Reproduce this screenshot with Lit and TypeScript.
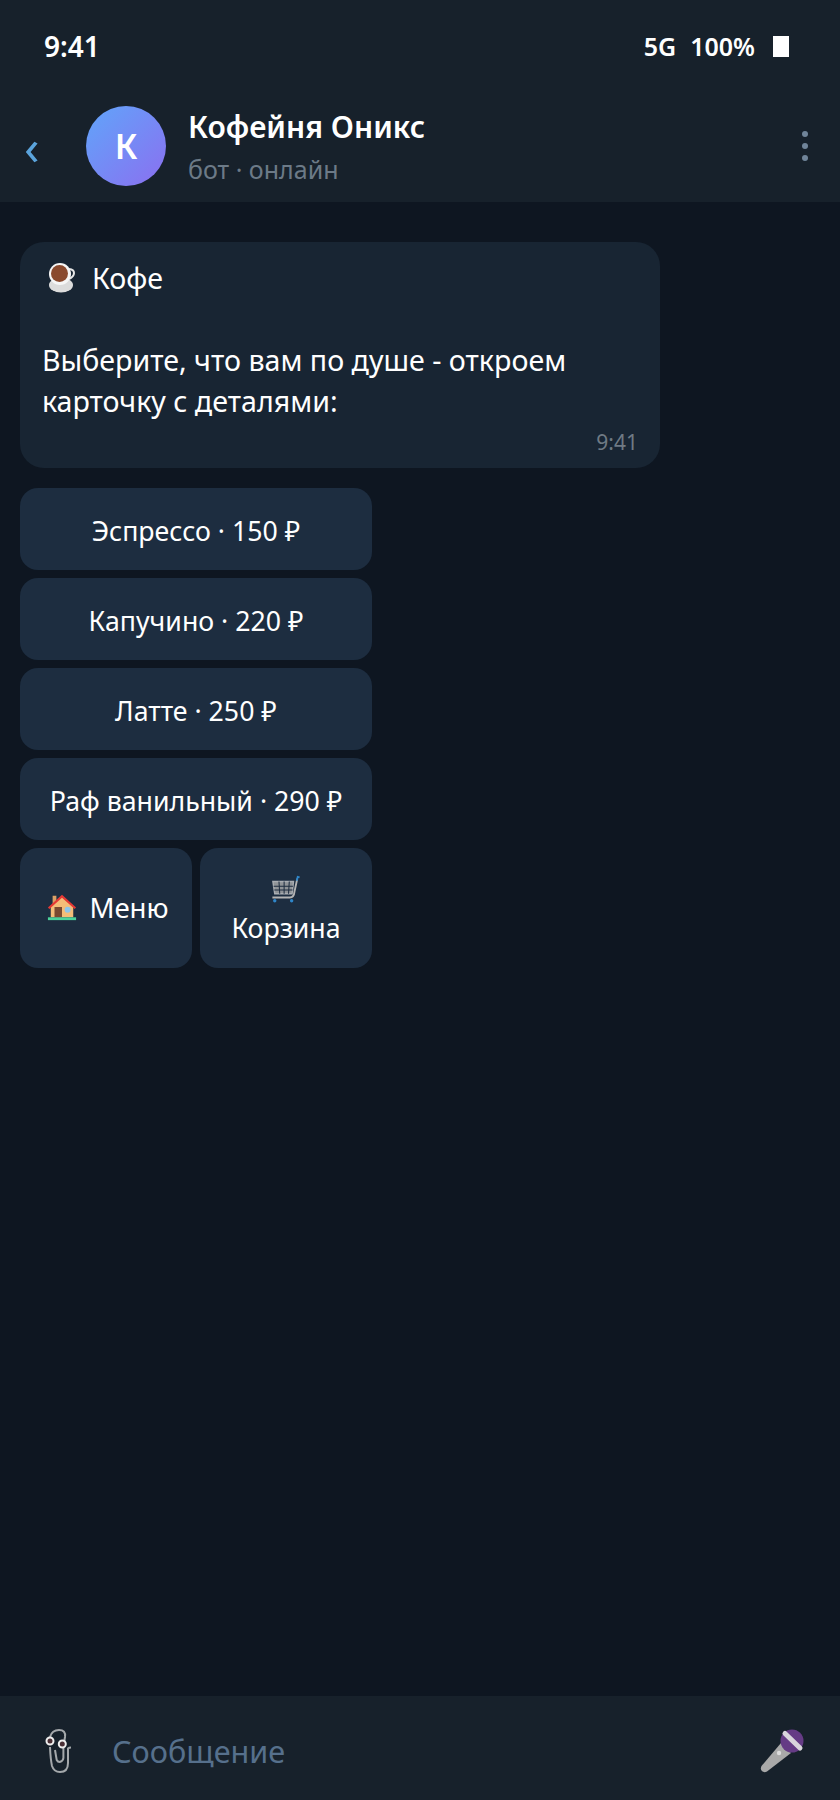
import { LitElement, html, css, svg } from 'lit';
import { customElement } from 'lit/decorators.js';

const coffeeIcon = svg`<svg class="emoji cup" viewBox="0 0 30 32" width="30" height="32">
  <path d="M21 7q5 .500 5 4t-5 6" fill="none" stroke="#e6e6e6" stroke-width="2"/>
  <ellipse cx="13" cy="23" rx="12" ry="7.500" fill="#dcdcdc"/>
  <circle cx="12" cy="12" r="11" fill="#f6f6f6"/>
  <circle cx="11.500" cy="11.500" r="8.500" fill="#8a4a2e"/>
</svg>`;

const houseIcon = svg`<svg class="emoji" viewBox="0 0 32 32" width="30" height="30">
  <rect x="6" y="4" width="4" height="9" fill="#d9a066"/>
  <path d="M4 15 16 5l12 10v12H4z" fill="#f4bd78"/>
  <path d="M1 16.500 16 3l15 13.500-1.500 1.500L16 6 2.500 18z" fill="#e53935"/>
  <rect x="8" y="16" width="8" height="11" fill="#7a4a30"/>
  <circle cx="22" cy="19" r="3.200" fill="#8ec5ea"/>
  <rect x="1" y="27" width="30" height="3" fill="#4cd39a"/>
</svg>`;

const cartIcon = svg`<svg class="emoji" viewBox="0 0 32 32" width="30" height="30">
  <path d="M2 7h22l-1.500 13H4z" fill="#8f9397" stroke="#a9adb2" stroke-width="1.500"/>
  <path d="M8.500 7l.8 13M14 7v13M19.500 7l-.8 13M2.800 12h20.600M3.500 16h19.400" stroke="#1e2d40" stroke-width="1.100" fill="none"/>
  <path d="M28 4l-3 14q-.5 6-5 6H1.500" fill="none" stroke="#b4b4b4" stroke-width="2"/>
  <path d="M27.500 6l1-4 2 .6" fill="none" stroke="#2f86c9" stroke-width="2"/>
  <circle cx="4" cy="27.500" r="1.800" fill="#2f86c9"/>
  <circle cx="22" cy="27.500" r="1.800" fill="#2f86c9"/>
</svg>`;

const clipIcon = svg`<svg class="tool" viewBox="0 0 28 44" width="28" height="44">
  <g fill="none" stroke="#a4a8ab" stroke-width="2">
    <path d="M5 8q2-7 9-7t6 7l-1 6"/>
    <path d="M5 18q.500 12 2 19 2 6 8 6 8 0 8-9V19.500q1-1 3-1"/>
    <path d="M10 21l1.700 10q1 2 3 2 3.500-1 3.700-4V19"/>
  </g>
  <circle cx="5" cy="12" r="3.500" fill="#4a2f35" stroke="#eee" stroke-width="2"/>
  <circle cx="17.300" cy="15" r="3.500" fill="#4a2f35" stroke="#eee" stroke-width="2"/>
</svg>`;

const micIcon = svg`<svg class="tool" viewBox="0 0 44 44" width="44" height="44">
  <path d="M21 14 31 24 7 42.500q-3 1.500-5-.500t-.500-5z" fill="#a9a9a9"/>
  <circle cx="19" cy="24" r="2.200" fill="#dcdcdc"/>
  <circle cx="32" cy="12" r="11.500" fill="#653b85"/>
  <path d="M25 4.500 40 19" stroke="#d9d5dc" stroke-width="5" stroke-linecap="round"/>
</svg>`;

const products = ['Эспрессо · 150 ₽', 'Капучино · 220 ₽', 'Латте · 250 ₽', 'Раф ванильный · 290 ₽'];

@customElement('app-root')
export class AppRoot extends LitElement {
  static styles = css`
    :host {
      display: flex;
      flex-direction: column;
      height: 1800px;
      background: #0e1621;
      color: #fff;
      font-family: 'Noto Sans', 'Open Sans', sans-serif;
    }
    .status {
      height: 92px;
      box-sizing: border-box;
      padding: 0 51px 0 44px;
      background: #17212b;
      display: flex;
      justify-content: space-between;
      align-items: center;
      font-weight: 600;
    }
    .time { font-size: 28px; }
    .indicators {
      display: flex;
      align-items: center;
      gap: 14px;
      font-size: 25px;
    }
    .battery { width: 16px; height: 21px; background: #fff; margin-left: 4px; }
    .header {
      height: 110px;
      box-sizing: border-box;
      background: #17212b;
      display: flex;
      align-items: center;
      padding: 0 32px 2px 24px;
    }
    .back { width: 42px; color: #5ba4dc; font-size: 50px; line-height: 1; }
    .avatar {
      width: 80px;
      height: 80px;
      margin: 0 22px 0 20px;
      border-radius: 50%;
      background: linear-gradient(135deg, #60a5fa, #8b6ff0);
      display: flex;
      align-items: center;
      justify-content: center;
      font-size: 34px;
      font-weight: 600;
    }
    .title { flex: 1; }
    .name { font-size: 30px; font-weight: 600; line-height: 40px; }
    .sub { font-size: 25px; color: #6c7a87; line-height: 34px; margin-top: 5px; }
    .dots { display: flex; flex-direction: column; gap: 6px; }
    .dots span { width: 6px; height: 6px; border-radius: 50%; background: #708499; }
    .chat {
      flex: 1;
      padding: 40px 20px 0;
      display: flex;
      flex-direction: column;
      align-items: flex-start;
    }
    .bubble {
      width: 640px;
      height: 226px;
      box-sizing: border-box;
      padding: 15px 22px 0;
      background: #182533;
      border-radius: 24px;
      font-size: 28.600px;
      line-height: 41px;
    }
    .bubble .head { display: flex; align-items: center; gap: 14px; margin-bottom: 41px; }
    .bubble .cup { margin-left: 6px; }
    .bubble .ts {
      margin-top: 7px;
      text-align: right;
      font-size: 21px;
      line-height: 28px;
      color: #6f7a84;
    }
    .keyboard {
      width: 352px;
      margin-top: 20px;
      display: grid;
      grid-template-columns: 1fr 1fr;
      gap: 8px;
    }
    .btn {
      height: 82px;
      box-sizing: border-box;
      padding-top: 2px;
      grid-column: span 2;
      background: #1d2d40;
      border-radius: 18px;
      display: flex;
      align-items: center;
      justify-content: center;
      font-size: 26.700px;
      text-align: center;
    }
    .btn.half { grid-column: span 1; height: 120px; gap: 12px; }
    .btn.menu { font-size: 27.600px; padding: 0 0 2px 4px; }
    .btn.stack {
      flex-direction: column;
      justify-content: flex-start;
      padding-top: 27px;
      gap: 4px;
    }
    .btn .emoji { flex: none; }
    .footer {
      height: 104px;
      box-sizing: border-box;
      background: #17212b;
      display: flex;
      align-items: center;
      padding: 6px 36px 0 45px;
    }
    .placeholder { flex: 1; margin-left: 39px; font-size: 30.600px; color: #56708c; }
  `;

  render() {
    return html`
      <div class="status">
        <span class="time">9:41</span>
        <div class="indicators"><span>5G</span><span>100%</span><span class="battery"></span></div>
      </div>
      <div class="header">
        <span class="back">‹</span>
        <div class="avatar">К</div>
        <div class="title">
          <div class="name">Кофейня Оникс</div>
          <div class="sub">бот · онлайн</div>
        </div>
        <div class="dots"><span></span><span></span><span></span></div>
      </div>
      <div class="chat">
        <div class="bubble">
          <div class="head">${coffeeIcon}<span>Кофе</span></div>
          <div>Выберите, что вам по душе - откроем<br />карточку с деталями:</div>
          <div class="ts">9:41</div>
        </div>
        <div class="keyboard">
          ${products.map((p) => html`<div class="btn">${p}</div>`)}
          <div class="btn half menu">${houseIcon}<span>Меню</span></div>
          <div class="btn half stack">${cartIcon}<span>Корзина</span></div>
        </div>
      </div>
      <div class="footer">
        ${clipIcon}
        <span class="placeholder">Сообщение</span>
        ${micIcon}
      </div>
    `;
  }
}
